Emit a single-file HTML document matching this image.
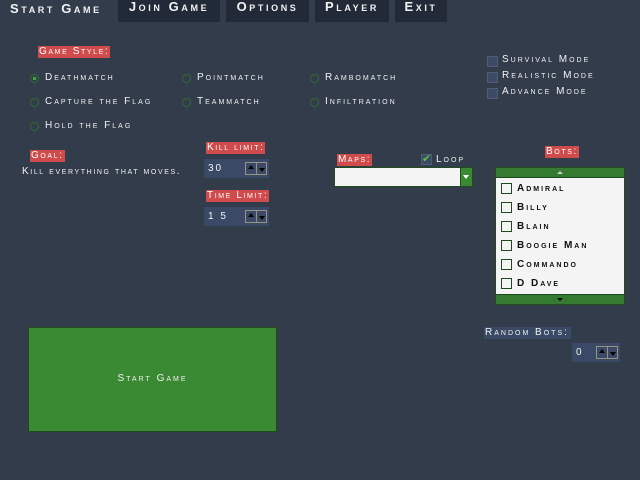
<!DOCTYPE html>
<html><head><meta charset="utf-8"><style>
*{margin:0;padding:0;box-sizing:border-box}
body{width:640px;height:480px;background:#323c4b;position:relative;overflow:hidden;font-family:"Liberation Sans","DejaVu Sans",sans-serif;color:#f2f2f2;font-variant:small-caps;font-size:10px;letter-spacing:2px}
.a{position:absolute;white-space:nowrap}
.tab{position:absolute;top:0;height:22px;background:#222a37;font-size:13px;font-weight:bold;letter-spacing:2.6px;text-align:center;line-height:13px;white-space:nowrap}
.lbl{position:absolute;background:#d04c4c;color:#fff;height:12px;line-height:12px;padding:0 1px;white-space:nowrap;letter-spacing:1.6px}
.r{position:absolute;width:9px;height:9px;border:1px solid #2f6e2a;border-radius:50%}
.spin{position:absolute;background:#3a4a66;height:19px}
.spin .t{position:absolute;left:4px;top:4px}
.spin .b{position:absolute;top:3px;width:22px;height:13px;border:1px solid #9a9080}
.spin .b:after{content:"";position:absolute;left:10px;top:0;width:1px;height:11px;background:#9a9080}
.up{position:absolute;left:2px;top:2px;width:0;height:0;border-left:3px solid transparent;border-right:3px solid transparent;border-bottom:4px solid #000}
.dn{position:absolute;left:13px;top:5px;width:0;height:0;border-left:3px solid transparent;border-right:3px solid transparent;border-top:4px solid #000}
.cb{position:absolute;width:11px;height:11px;background:#3c4a63;border:1px solid #4e5d78}
.it{position:absolute;color:#111;font-weight:bold;white-space:nowrap}
.it i{position:absolute;left:0;top:0;width:11px;height:11px;border:1px solid #1f4a1c}
.it span{position:absolute;left:16px;top:0;line-height:11px;white-space:nowrap}
</style></head><body>
<div class="a" style="left:10px;top:1px;font-size:13px;font-weight:bold;letter-spacing:2.6px">Start Game</div>
<div class="tab" style="left:118px;width:102px">Join Game</div>
<div class="tab" style="left:226px;width:83px">Options</div>
<div class="tab" style="left:315px;width:74px">Player</div>
<div class="tab" style="left:395px;width:52px">Exit</div>

<div class="lbl" style="left:38px;top:46px">Game Style:</div>
<div class="r" style="left:30px;top:74px"><div style="position:absolute;left:2px;top:2px;width:3px;height:3px;background:#3ca838"></div></div>
<div class="a" style="left:45px;top:72px">Deathmatch</div>
<div class="r" style="left:182px;top:74px"></div><div class="a" style="left:197px;top:72px">Pointmatch</div>
<div class="r" style="left:310px;top:74px"></div><div class="a" style="left:325px;top:72px">Rambomatch</div>
<div class="r" style="left:30px;top:98px"></div><div class="a" style="left:45px;top:96px">Capture the Flag</div>
<div class="r" style="left:182px;top:98px"></div><div class="a" style="left:197px;top:96px">Teammatch</div>
<div class="r" style="left:310px;top:98px"></div><div class="a" style="left:325px;top:96px">Infiltration</div>
<div class="r" style="left:30px;top:122px"></div><div class="a" style="left:45px;top:120px">Hold the Flag</div>

<div class="lbl" style="left:30px;top:150px">Goal:</div>
<div class="a" style="left:22px;top:166px;letter-spacing:1.6px">Kill everything that moves.</div>

<div class="lbl" style="left:206px;top:142px">Kill limit:</div>
<div class="spin" style="left:204px;top:159px;width:65px"><span class="t">30</span><div class="b" style="left:41px"><i class="up"></i><i class="dn"></i></div></div>
<div class="lbl" style="left:206px;top:190px">Time Limit:</div>
<div class="spin" style="left:204px;top:207px;width:65px"><span class="t">1 5</span><div class="b" style="left:41px"><i class="up"></i><i class="dn"></i></div></div>

<div class="cb" style="left:487px;top:56px"></div><div class="a" style="left:502px;top:54px">Survival Mode</div>
<div class="cb" style="left:487px;top:72px"></div><div class="a" style="left:502px;top:70px">Realistic Mode</div>
<div class="cb" style="left:487px;top:88px"></div><div class="a" style="left:502px;top:86px">Advance Mode</div>

<div class="lbl" style="left:337px;top:154px">Maps:</div>
<div class="cb" style="left:421px;top:154px"><span class="a" style="left:0;top:-3px;color:#5cc04a;font-size:11px;font-variant:normal">✔</span></div>
<div class="a" style="left:436px;top:154px">Loop</div>
<div class="a" style="left:334px;top:167px;width:139px;height:20px;background:#f4f4f4;border:1px solid #1f4a1c"></div>
<div class="a" style="left:460px;top:167px;width:13px;height:20px;background:#3a8a34;border:1px solid #1f4a1c"><i style="position:absolute;left:2px;top:7px;border-left:3px solid transparent;border-right:3px solid transparent;border-top:4px solid #fff"></i></div>

<div class="lbl" style="left:545px;top:146px">Bots:</div>
<div class="a" style="left:495px;top:167px;width:130px;height:138px;background:#f4f4f4;border:1px solid #1f4a1c"></div>
<div class="a" style="left:495px;top:167px;width:130px;height:11px;background:#347a30;border:1px solid #1f4a1c"><i style="position:absolute;left:61px;top:3px;border-left:3px solid transparent;border-right:3px solid transparent;border-bottom:3px solid #ccc"></i></div>
<div class="a" style="left:495px;top:294px;width:130px;height:11px;background:#347a30;border:1px solid #1f4a1c"><i style="position:absolute;left:61px;top:3px;border-left:3px solid transparent;border-right:3px solid transparent;border-top:3px solid #000"></i></div>
<div class="it" style="left:501px;top:183px"><i></i><span>Admiral</span></div>
<div class="it" style="left:501px;top:202px"><i></i><span>Billy</span></div>
<div class="it" style="left:501px;top:221px"><i></i><span>Blain</span></div>
<div class="it" style="left:501px;top:240px"><i></i><span>Boogie Man</span></div>
<div class="it" style="left:501px;top:259px"><i></i><span>Commando</span></div>
<div class="it" style="left:501px;top:278px"><i></i><span>D Dave</span></div>

<div class="a" style="left:28px;top:327px;width:249px;height:105px;background:#3a8a34;border:1px solid #1f4a1c;text-align:center;line-height:101px">Start Game</div>

<div class="a" style="left:484px;top:327px;height:12px;background:#3a4a66;line-height:12px;padding:0 2px 0 1px">Random Bots:</div>
<div class="spin" style="left:572px;top:343px;width:48px"><span class="t">0</span><div class="b" style="left:24px"><i class="up"></i><i class="dn"></i></div></div>
</body></html>
